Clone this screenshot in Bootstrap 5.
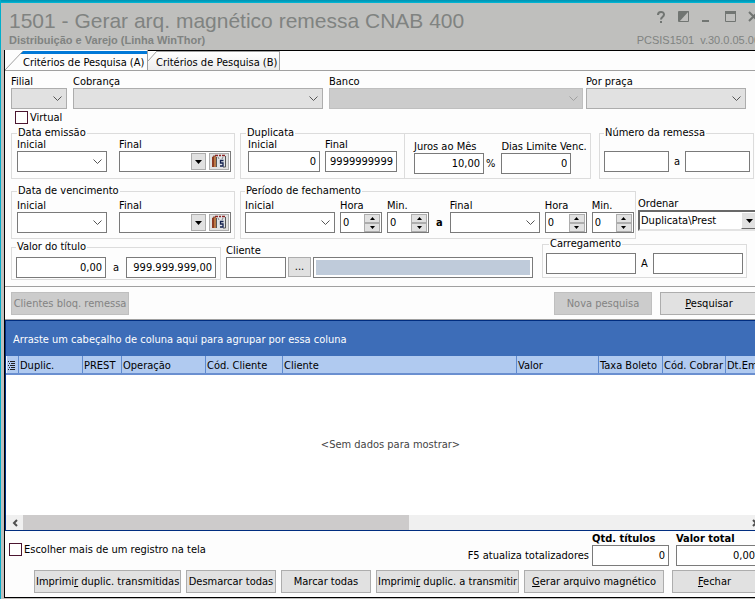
<!DOCTYPE html>
<html lang="pt-BR">
<head>
<meta charset="utf-8">
<meta name="viewport" content="width=device-width, initial-scale=1">
<title>1501 - Gerar arq. magnético remessa CNAB 400</title>
<link href="https://cdn.jsdelivr.net/npm/bootstrap@5.3.0/dist/css/bootstrap.min.css" rel="stylesheet">
<style>
  body { font: 11px/12px "DejaVu Sans Condensed", Tahoma, "DejaVu Sans", sans-serif; color: #000; background: #bfbfbd; overflow: hidden; }
  .app { min-width: 764px; min-height: 100vh; border-left: 1px solid #00aecb; }
  .edge { height: 3px; background: linear-gradient(#0093b5, #00a3c2 60%, #00c0dc); }
  .titlebar { height: 47px; padding: 6px 0 0 8px; font-family: "Liberation Sans", Arial, sans-serif; color: #808381; }
  .titlebar h1 { font-size: 21px; line-height: 24px; }
  .titlebar .sub { font-size: 11px; line-height: 14px; }
  .titlebar button { color: #717572; background: none; border: 0; padding: 0; line-height: 0; }
  .winbtns { gap: 11px; height: 24px; padding-left: 18px; }
  .pane { margin-left: 3px; border: solid #000; border-width: 1px 0 1px 1px; background: #fdfdfd; margin-bottom: 1px; }
  .tabs { height: 20px; border-bottom: 1px solid #a0a0a0; }
  .tabs button { position: relative; height: 20px; padding: 5px 2px 0 18px; border: 0; border-right: 1px solid #a0a0a0; font-size: inherit; line-height: 14px; color: #000; white-space: nowrap; }
  .tabs button.on { width: 143px; background: #fdfdfd; }
  .tabs button.off { width: 132px; padding: 4px 0 0 8px; height: 19px; background: linear-gradient(#fff, #ececec); border-top: 1px solid #a0a0a0; }
  .tabs svg { position: absolute; left: 0; top: 0; }
  .tabs button.off svg { top: -1px; }
  label, legend, .word { font-size: 11px; line-height: 12px; white-space: nowrap; display: block; }
  fieldset, .box { border: 1px solid #dcdcdc; min-width: 0; flex: none; padding: 0 3px 5px 5px; }
  fieldset > legend { float: none; width: auto; margin: 0; padding: 0 1px; }
  .box { margin-top: 6px; }
  .fld, select.pick { display: block; height: 21px; border: 1px solid #7a7a7a; border-radius: 0; background: #fff; padding: 0 3px; font-size: 11px; line-height: 18px; color: #000; outline-offset: 0; }
  input.fld { text-align: right; }
  input.slim { width: 65px; } input.mid { width: 72px; } input.w60 { width: 60px; } .w90 { width: 90px; }
  select.pick { appearance: none; background: #fff url("data:image/svg+xml,%3Csvg xmlns='http://www.w3.org/2000/svg' width='9' height='6'%3E%3Cpath d='M.5.5l4 4 4-4' fill='none' stroke='%23555'/%3E%3C/svg%3E") no-repeat right 4px center; }
  select.grey { width: 100%; background-color: #e1e1e1; border-color: #adadad; }
  select.grey:disabled { background-color: #ccc; border-color: #bfbfbf; opacity: 1; background-image: url("data:image/svg+xml,%3Csvg xmlns='http://www.w3.org/2000/svg' width='9' height='6'%3E%3Cpath d='M.5.5l4 4 4-4' fill='none' stroke='%23a0a0a0'/%3E%3C/svg%3E"); }
  .toprow { display: grid; grid-template-columns: 56px 250fr 254fr 157fr; column-gap: 6px; padding: 5px 18px 0 6px; }
  .toprow > :last-child { margin-left: -3px; }
  .check { gap: 2px; }
  .virt { padding: 2px 0 0 10px; } .multi { margin-bottom: 10px; }
  .check input { appearance: none; width: 13px; height: 13px; border: 1px solid #4b1530; background: #fff; margin: 0; }
  .check input:checked { background: #4b1530; }
  .combo { width: 112px; padding: 0 1px 0 0; gap: 3px; }
  .combo input { border: 0; min-width: 0; flex: 1; height: 17px; outline: 0; }
  .arrow { border: 1px solid #adadad; background: #e1e1e1; padding: 0; line-height: 0; border-radius: 0; color: #000; display: flex; align-items: center; justify-content: center; }
  .combo .arrow { height: 17px; }
  .drop { width: 15px; } .cal { width: 20px; }
  .spin { width: 42px; padding: 0 1px 0 2px; }
  .spin input { border: 0; width: 20px; padding: 0; font-size: 11px; outline: 0; height: 17px; }
  .spin .arrow { width: 16px; height: 9px; }
  .act { height: 23px; border: 1px solid #adadad; background: #e1e1e1; border-radius: 0; padding: 0 1px; font-size: 11px; line-height: 20px; color: #000; white-space: nowrap; }
  .act:disabled { background: #ccc; border-color: #bfbfbf; color: #838383; opacity: 1; }
  .datos { gap: 12px; } .g5 { gap: 5px; }
  .rowset { padding-left: 6px; }
  .r1 { margin-top: 3px; } .r2 { margin-top: 6px; } .r3 { margin-top: 2px; }
  .r2 fieldset { padding-top: 3px; }
  .dup { width: 165px; padding-left: 7px; }
  .dup legend { margin-left: -2px; }
  .juros { width: 187px; padding: 7px 0 4px 9px; margin-left: -1px; }
  .juros .fld { width: 70px; }
  .pct { padding: 0 6px 4px 2px; }
  .remessa { margin-left: 3px; padding-left: 4px; }
  .remessa > div { padding-top: 12px; }
  .per { width: 396px; padding-left: 4px; padding-right: 0; }
  .per b { padding: 0 2px 4px; }
  .tit { width: 210px; padding: 4px 4px 1px 4px; }
  .carr { padding: 3px; margin: -3px 0 4px 4px; }
  .carr legend { margin-left: 3px; }
  .order { padding-top: 13px; margin-left: -3px; }
  .order select { width: 122px; height: 21px; border: 2px solid; border-color: #696969 #e3e3e3 #e3e3e3 #696969; background: #fff; appearance: none; font-size: 11px; line-height: 15px; padding: 0 1px; border-radius: 0; }
  .order .arrow { position: absolute; right: 2px; top: 2px; width: 17px; height: 17px; pointer-events: none; border-color: #fff #696969 #696969 #fff; }
  .cli { gap: 2px; } .dots { width: 23px; height: 20px; line-height: 16px; }
  .client { width: 220px; padding: 2px; }
  .client output { display: block; background: #bfcbda; height: 15px; }
  .tools { border-top: 1px solid #a0a0a0; border-bottom: 1px solid #a0a0a0; padding: 5px 6px 4px 6px; gap: 8px; }
  .tools .act { width: 98px; } .tools .act:first-child { width: 118px; }
  .grid { border: solid #002d80; border-width: 1px 0 1px 1px; background: #fff; }
  .group { background: #3d6db8; color: #fff; height: 35px; padding: 13px 8px 0 7px; }
  .heads { table-layout: fixed; width: 100%; margin: 0; border-bottom: 2px solid #6a8fd0; }
  .heads th { font-weight: 400; height: 18px; padding: 3px 0 0 1px; background: #b0caf0; border-right: 1px solid #5f8ace; border-left: 1px solid #f0f6ff; line-height: 14px; white-space: nowrap; overflow: hidden; }
  .nodata { color: #444; padding-left: 11px; }
  .scroll { height: 15px; background: #f0f0f0; padding-right: 1px; }
  .scroll button { width: 17px; border: 0; background: none; padding: 0; line-height: 0; }
  .thumb { width: 386px; background: #cdcbcb; }
  .foot { padding: 1px 5px 0 4px; }
  .foot .fld { width: 77px; } .foot .wide { width: 83px; } .foot b { line-height: 13px; }
  .sum { gap: 7px; } .f5 { margin: 0 -4px 4px 0; }
  .acts { padding: 4px 5px 4px 29px; gap: 5px; }
  .acts .s { width: 90px; } .acts .m { width: 143px; } .acts .l { width: 147px; }
  .acts .x { width: 85px; margin-left: 3px; } .acts .g { width: 140px; }
</style>
<script src="https://cdn.jsdelivr.net/npm/bootstrap@5.3.0/dist/js/bootstrap.bundle.min.js"></script>
</head>
<body>
<svg class="d-none">
  <symbol id="dn" viewBox="0 0 7 4"><path d="M0 0h7L3.500 4z"/></symbol>
  <symbol id="sd" viewBox="0 0 5 3"><path d="M0 0h5L2.500 3z"/></symbol>
  <symbol id="su" viewBox="0 0 5 3"><path d="M0 3h5L2.500 0z"/></symbol>
  <symbol id="cal" viewBox="0 0 16 15">
    <path d="M1 3v10h2V2z" fill="#8e3b22"/><path d="M3 2h2v11H3z" fill="#e9a25c"/><path d="M2 2h2v11" fill="none" stroke="#5d2b20" stroke-width=".7"/>
    <path d="M5 2h9v11H5z" fill="#dfe3e6"/><path d="M4 1.500h3M8 1.500h2M11 1.500h3" stroke="#8b2525" stroke-width="1.500"/>
    <path d="M5.500 3v10M14.500 2v11H12" fill="none" stroke="#555"/><path d="M7 3l1 2M12 3l-1 2" stroke="#888"/>
    <path d="M12.500 6.500H9.500V9H12v3H9" fill="none" stroke="#14214f" stroke-width="1.300"/>
  </symbol>
</svg>
<main class="app d-flex flex-column">
  <div class="edge"></div>
  <header class="titlebar d-flex justify-content-between">
    <div>
      <h1 class="fw-normal m-0">1501 - Gerar arq. magnético remessa CNAB 400</h1>
      <div class="sub fw-bold">Distribuição e Varejo (Linha WinThor)</div>
    </div>
    <div class="pe-1">
      <div class="winbtns d-flex align-items-start">
        <button type="button" aria-label="Ajuda"><svg width="12" height="16" fill="none" stroke="currentColor" stroke-width="2"><path d="M3 6c0-4 6-4 6-.5C9 8 6 8 6 10.500M6 12v2"/></svg></button>
        <button type="button" aria-label="Tema"><svg width="12" height="15"><path d="M.5 2.500h10v10H.5z" fill="none" stroke="currentColor"/><path d="M1 13V2h10z" fill="currentColor"/></svg></button>
        <button type="button" aria-label="Minimizar"><svg width="13" height="15"><path d="M1 11h7v2H1z" fill="currentColor"/></svg></button>
        <button type="button" aria-label="Maximizar"><svg width="12" height="15"><path d="M.5 3v9.500h10V3z" fill="none" stroke="currentColor"/><path d="M0 2h11v3H0z" fill="currentColor"/></svg></button>
        <button type="button" aria-label="Fechar janela"><svg width="12" height="15"><path d="M1 3l9 9M10 3l-9 9" stroke="currentColor" stroke-width="2"/></svg></button>
      </div>
      <div class="sub text-nowrap">PCSIS1501 &nbsp;v.30.0.05.00</div>
    </div>
  </header>

  <div class="pane flex-grow-1 d-flex flex-column">
    <div class="tabs d-flex align-items-end" role="tablist">
      <button type="button" class="on text-start" role="tab" aria-selected="true"><svg width="142" height="20"><path d="M18 1h124v3H15z" fill="#0078d7"/><path d="M0 20L18 1" stroke="#a0a0a0"/></svg>Critérios de Pesquisa (A)</button>
      <button type="button" class="off text-start" role="tab" aria-selected="false"><svg width="12" height="14"><path d="M0 0h9L0 10z" fill="#fdfdfd"/><path d="M0 10L9 0" stroke="#a0a0a0"/></svg>Critérios de Pesquisa (B)</button>
    </div>

    <div class="toprow">
      <div><label for="filial">Filial</label><select id="filial" class="pick grey"><option></option></select></div>
      <div><label for="cobr">Cobrança</label><select id="cobr" class="pick grey"><option></option></select></div>
      <div><label for="banco">Banco</label><select id="banco" class="pick grey" disabled><option></option></select></div>
      <div><label for="praca">Por praça</label><select id="praca" class="pick grey"><option></option></select></div>
    </div>
    <div class="check virt d-flex align-items-center"><input type="checkbox" id="virt"><label for="virt">Virtual</label></div>

    <div class="rowset r1 d-flex g5">
      <fieldset><legend>Data emissão</legend>
        <div class="datos d-flex">
          <div><label for="ei">Inicial</label><select id="ei" class="pick w90"><option></option></select></div>
          <div><label for="ef">Final</label><div class="fld combo d-flex align-items-center"><input id="ef" type="text"><button type="button" class="arrow drop" aria-label="Abrir"><svg width="7" height="4"><use href="#dn"/></svg></button><button type="button" class="arrow cal" aria-label="Calendário"><svg width="16" height="15"><use href="#cal"/></svg></button></div></div>
        </div>
      </fieldset>
      <div class="d-flex">
        <fieldset class="dup"><legend>Duplicata</legend>
          <div class="d-flex g5">
            <div><label for="di">Inicial</label><input id="di" class="fld mid" value="0"></div>
            <div><label for="df">Final</label><input id="df" class="fld mid" value="9999999999"></div>
          </div>
        </fieldset>
        <div class="box juros d-flex align-items-end">
          <div><label for="jm">Juros ao Mês</label><input id="jm" class="fld" value="10,00"></div>
          <div class="word pct">%</div>
          <div><label for="dl">Dias Limite Venc.</label><input id="dl" class="fld" value="0"></div>
        </div>
      </div>
      <fieldset class="remessa"><legend>Número da remessa</legend>
        <div class="d-flex g5 align-items-center">
          <input class="fld slim" aria-label="Remessa inicial"><span class="word">a</span><input class="fld slim" aria-label="Remessa final">
        </div>
      </fieldset>
    </div>

    <div class="rowset r2 d-flex g5">
      <fieldset><legend>Data de vencimento</legend>
        <div class="datos d-flex">
          <div><label for="vi">Inicial</label><select id="vi" class="pick w90"><option></option></select></div>
          <div><label for="vf">Final</label><div class="fld combo d-flex align-items-center"><input id="vf" type="text"><button type="button" class="arrow drop" aria-label="Abrir"><svg width="7" height="4"><use href="#dn"/></svg></button><button type="button" class="arrow cal" aria-label="Calendário"><svg width="16" height="15"><use href="#cal"/></svg></button></div></div>
        </div>
      </fieldset>
      <fieldset class="per"><legend>Período de fechamento</legend>
        <div class="d-flex g5 align-items-end">
          <div><label for="pi">Inicial</label><select id="pi" class="pick w90"><option></option></select></div>
          <div><label for="h1">Hora</label><div class="fld spin d-flex align-items-center justify-content-between"><input id="h1" value="0"><span><button type="button" class="arrow" aria-label="Mais"><svg width="5" height="3"><use href="#su"/></svg></button><button type="button" class="arrow" aria-label="Menos"><svg width="5" height="3"><use href="#sd"/></svg></button></span></div></div>
          <div><label for="m1">Min.</label><div class="fld spin d-flex align-items-center justify-content-between"><input id="m1" value="0"><span><button type="button" class="arrow" aria-label="Mais"><svg width="5" height="3"><use href="#su"/></svg></button><button type="button" class="arrow" aria-label="Menos"><svg width="5" height="3"><use href="#sd"/></svg></button></span></div></div>
          <b class="word">a</b>
          <div><label for="pf">Final</label><select id="pf" class="pick w90"><option></option></select></div>
          <div><label for="h2">Hora</label><div class="fld spin d-flex align-items-center justify-content-between"><input id="h2" value="0"><span><button type="button" class="arrow" aria-label="Mais"><svg width="5" height="3"><use href="#su"/></svg></button><button type="button" class="arrow" aria-label="Menos"><svg width="5" height="3"><use href="#sd"/></svg></button></span></div></div>
          <div><label for="m2">Min.</label><div class="fld spin d-flex align-items-center justify-content-between"><input id="m2" value="0"><span><button type="button" class="arrow" aria-label="Mais"><svg width="5" height="3"><use href="#su"/></svg></button><button type="button" class="arrow" aria-label="Menos"><svg width="5" height="3"><use href="#sd"/></svg></button></span></div></div>
        </div>
      </fieldset>
      <div class="order"><label for="ord">Ordenar</label><div class="position-relative"><select id="ord"><option>Duplicata\Prest</option></select><span class="arrow"><svg width="7" height="4"><use href="#dn"/></svg></span></div></div>
    </div>

    <div class="rowset r3 d-flex align-items-start g5 pb-1">
      <fieldset class="tit"><legend>Valor do título</legend>
        <div class="d-flex align-items-center justify-content-between"><input class="fld w90" value="0,00" aria-label="Valor inicial"><span class="word">a</span><input class="fld w90" value="999.999.999,00" aria-label="Valor final"></div>
      </fieldset>
      <div class="pt-1"><label for="cli">Cliente</label>
        <div class="d-flex cli"><input id="cli" class="fld w60"><button type="button" class="act dots">...</button><div class="fld client"><output></output></div></div>
      </div>
      <fieldset class="carr"><legend>Carregamento</legend>
        <div class="d-flex g5 align-items-center"><input class="fld w90" aria-label="Carregamento inicial"><span class="word">A</span><input class="fld w90" aria-label="Carregamento final"></div>
      </fieldset>
    </div>

    <div class="tools d-flex">
      <button class="act" type="button" disabled>Clientes bloq. remessa</button>
      <button class="act ms-auto" type="button" disabled>Nova pesquisa</button>
      <button class="act" type="button"><u>P</u>esquisar</button>
    </div>

    <section class="grid flex-grow-1 d-flex flex-column">
      <div class="group">Arraste um cabeçalho de coluna aqui para agrupar por essa coluna</div>
      <table class="heads">
        <colgroup><col style="width:12px"><col style="width:64px"><col style="width:39px"><col style="width:84px"><col style="width:77px"><col><col style="width:82px"><col style="width:64px"><col style="width:63px"><col style="width:38px"></colgroup>
        <thead><tr><th aria-label="Colunas"><svg class="d-block" width="8" height="10" stroke="#222"><path d="M0 .5h1M2 .5h5M1 2.500h1M3 2.500h4M0 4.500h1M2 4.500h5M1 6.500h1M3 6.500h4M0 8.500h1M2 8.500h5"/></svg></th><th>Duplic.</th><th>PREST</th><th>Operação</th><th>Cód. Cliente</th><th>Cliente</th><th>Valor</th><th>Taxa Boleto</th><th>Cód. Cobrar</th><th>Dt.Em</th></tr></thead>
      </table>
      <div class="nodata flex-grow-1 d-flex align-items-center justify-content-center">&lt;Sem dados para mostrar&gt;</div>
      <div class="scroll d-flex">
        <button type="button" aria-label="Rolar à esquerda"><svg width="6" height="8" fill="none" stroke="#505050" stroke-width="2"><path d="M5 1L2 4l3 3"/></svg></button>
        <div class="thumb"></div>
        <button type="button" class="ms-auto" aria-label="Rolar à direita"><svg width="6" height="8" fill="none" stroke="#505050" stroke-width="2"><path d="M1 1l3 3-3 3"/></svg></button>
      </div>
    </section>

    <footer>
      <div class="foot d-flex align-items-end">
        <div class="check multi d-flex align-items-center"><input type="checkbox" id="multi"><label for="multi">Escolher mais de um registro na tela</label></div>
        <div class="sum d-flex align-items-end ms-auto">
          <span class="word f5">F5 atualiza totalizadores</span>
          <div><label for="qt"><b>Qtd. títulos</b></label><input id="qt" class="fld" value="0"></div>
          <div><label for="vt"><b>Valor total</b></label><input id="vt" class="fld wide" value="0,00"></div>
        </div>
      </div>
      <div class="acts d-flex">
        <button class="act l" type="button">Imprimi<u>r</u> duplic. transmitidas</button>
        <button class="act s" type="button">Desmarcar todas</button>
        <button class="act s" type="button">Marcar todas</button>
        <button class="act m" type="button">Imprimi<u>r</u> duplic. a transmitir</button>
        <button class="act g" type="button"><u>G</u>erar arquivo magnético</button>
        <button class="act x" type="button"><u>F</u>echar</button>
      </div>
    </footer>
  </div>
</main>
</body>
</html>
